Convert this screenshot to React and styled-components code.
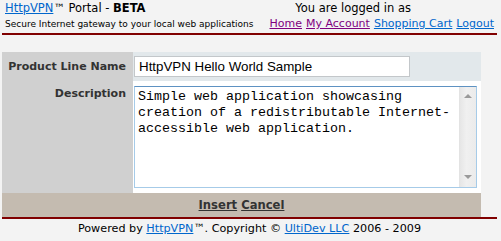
import React from "react";
import styled, { createGlobalStyle } from "styled-components";

const GlobalStyle = createGlobalStyle`
  body {
    margin: 0;
    background: #f3f3f3;
    font-family: "DejaVu Sans", Verdana, sans-serif;
    color: #000;
  }
`;

const Page = styled.div`
  width: 495px;
  padding-left: 2px;
`;

const Header = styled.div`
  display: flex;
  justify-content: space-between;
  height: 33px;
  border-bottom: 2px solid #800000;
`;

const Brand = styled.div`
  padding: 2px 0 0 3px;
`;

const Title = styled.div`
  font-size: 11.5px;
  line-height: 13px;
  b {
    font-weight: bold;
  }
`;

const Tagline = styled.div`
  font-size: 9px;
  line-height: 11px;
  margin-top: 4px;
  white-space: nowrap;
`;

const UserBox = styled.div`
  display: flex;
  flex-direction: column;
  align-items: flex-end;
  padding: 2px 3px 0 0;
`;

const LoggedIn = styled.div`
  font-size: 11.5px;
  line-height: 13px;
  padding-right: 83px;
`;

const Nav = styled.div`
  display: flex;
  gap: 4px;
  margin-top: 2px;
  font-size: 11px;
  line-height: 13px;
`;

const Link = styled.a`
  color: ${(p) => (p.$visited ? "#800080" : "#0066cc")};
  text-decoration: underline;
  cursor: pointer;
`;

const Form = styled.div`
  margin-top: 17px;
  width: 479px;
  display: grid;
  grid-template-columns: 131px 1fr;
`;

const Label = styled.div`
  background: #d0d0d0;
  color: #333;
  font-size: 11px;
  font-weight: bold;
  line-height: 13px;
  text-align: right;
  padding: ${(p) => (p.$top ? "6px 7px 0 0" : "0 7px 0 0")};
  display: flex;
  align-items: ${(p) => (p.$top ? "flex-start" : "center")};
  justify-content: flex-end;
`;

const Field = styled.div`
  background: ${(p) => (p.$plain ? "#ffffff" : "#e2e8eb")};
  padding: ${(p) => (p.$plain ? "5px 0 5px 1px" : "4px 0 4px 1px")};
`;

const TextInput = styled.input`
  box-sizing: border-box;
  width: 276px;
  height: 21px;
  border: 1px solid #c3c7ca;
  background: #fff;
  padding: 0 4px;
  font-family: "Liberation Sans", Arial, sans-serif;
  font-size: 13.33px;
  color: #000;
  outline: none;
  display: block;
`;

const AreaBox = styled.div`
  box-sizing: border-box;
  width: 343px;
  height: 102px;
  border: 1px solid #a6cbe8;
  border-top-color: #5e92c2;
  background: #fff;
  display: flex;
`;

const TextArea = styled.textarea`
  flex: 1;
  min-width: 0;
  border: none;
  padding: 2px 2px 2px 3px;
  font-family: "Liberation Mono", "Courier New", monospace;
  font-size: 13.33px;
  line-height: 16px;
  color: #000;
  resize: none;
  overflow: hidden;
  outline: none;
  background: transparent;
`;

const ScrollRail = styled.div`
  width: 16px;
  border-left: 1px solid #e3e3e3;
  background: linear-gradient(to right, #e6e6e6, #f0f0f0 40%, #ebebeb);
  display: flex;
  flex-direction: column;
  justify-content: space-between;
  align-items: center;
  padding: 7px 0 8px;
`;

const Arrow = styled.span`
  width: 0;
  height: 0;
  border-left: 4px solid transparent;
  border-right: 4px solid transparent;
  ${(p) =>
    p.$down ? "border-top: 4px solid #9a9a9a;" : "border-bottom: 4px solid #9a9a9a;"}
`;

const Actions = styled.div`
  grid-column: 1 / span 2;
  background: #c4bbb0;
  height: 24px;
  display: flex;
  align-items: center;
  justify-content: center;
  gap: 4px;
  font-size: 11.6px;
  font-weight: bold;
`;

const ActionLink = styled.a`
  color: #333;
  text-decoration: underline;
  cursor: pointer;
`;

const Footer = styled.div`
  border-top: 2px solid #800000;
  text-align: center;
  font-size: 11.2px;
  line-height: 13px;
  padding-top: 3px;
`;

export default function App() {
  return (
    <>
      <GlobalStyle />
      <Page>
        <Header>
          <Brand>
            <Title>
              <Link>HttpVPN</Link>™ Portal - <b>BETA</b>
            </Title>
            <Tagline>Secure Internet gateway to your local web applications</Tagline>
          </Brand>
          <UserBox>
            <LoggedIn>You are logged in as</LoggedIn>
            <Nav>
              <Link $visited>Home</Link>
              <Link $visited>My Account</Link>
              <Link>Shopping Cart</Link>
              <Link>Logout</Link>
            </Nav>
          </UserBox>
        </Header>
        <Form>
          <Label>Product Line Name</Label>
          <Field>
            <TextInput defaultValue="HttpVPN Hello World Sample" />
          </Field>
          <Label $top>Description</Label>
          <Field $plain>
            <AreaBox>
              <TextArea defaultValue="Simple web application showcasing creation of a redistributable Internet-accessible web application." />
              <ScrollRail>
                <Arrow />
                <Arrow $down />
              </ScrollRail>
            </AreaBox>
          </Field>
          <Actions>
            <ActionLink>Insert</ActionLink>
            <ActionLink>Cancel</ActionLink>
          </Actions>
        </Form>
        <Footer>
          Powered by <Link>HttpVPN</Link>™. Copyright © <Link>UltiDev LLC</Link> 2006 - 2009
        </Footer>
      </Page>
    </>
  );
}
